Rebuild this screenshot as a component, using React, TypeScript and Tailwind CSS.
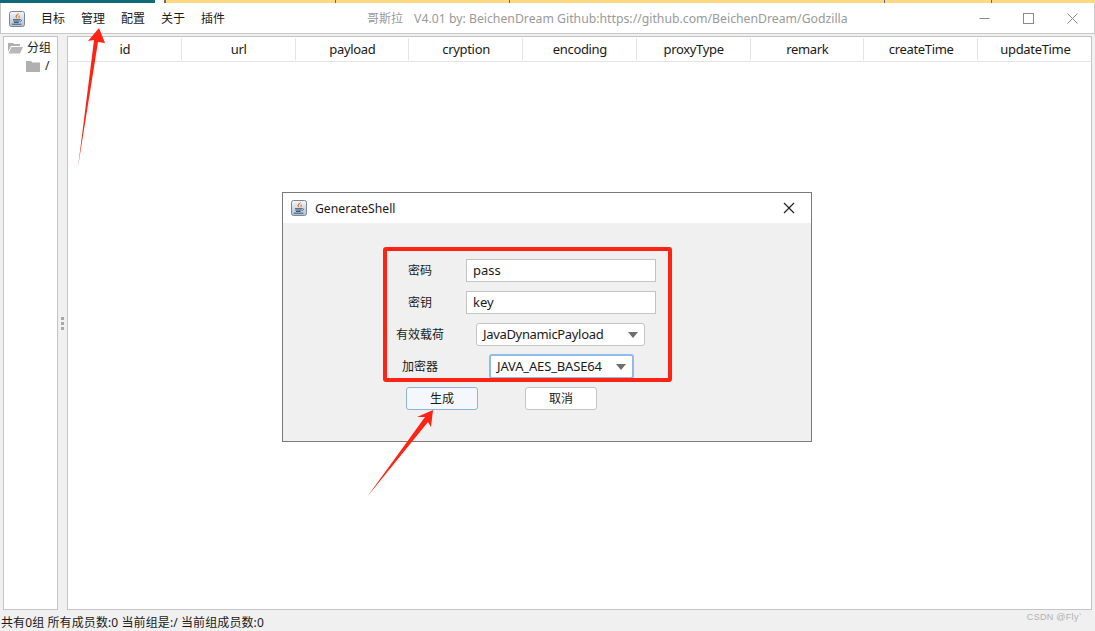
function JavaIcon() {
  return (
    <svg width="16" height="16" viewBox="0 0 16 16" className="shrink-0">
      <defs>
        <linearGradient id="jv" x1="0" y1="0" x2="0" y2="1">
          <stop offset="0" stopColor="#f6f7f9" />
          <stop offset="1" stopColor="#aebfd3" />
        </linearGradient>
      </defs>
      <rect x="0.5" y="0.5" width="15" height="15" rx="2" fill="url(#jv)" stroke="#76879b" />
      <path d="M9.6 1.8c.9 1.5-2.2 2.7-1.9 4.3.1.7.5 1.1.9 1.5-1.9-.7-2.6-1.9-1.8-3.2.7-1 2.7-1.5 2.8-2.6z" fill="#e06c14" />
      <path d="M11 3.9c-1 .6-1.8 1.1-1.5 2 .2.5.4.8.2 1.4.9-.5 1.3-1.2.9-1.9-.2-.5 0-.9.4-1.5z" fill="#e06c14" />
      <path d="M4 8.7h7M4.3 10.1h6.4M5 11.5h4.6M2.8 13.2h9.6" stroke="#3d5874" strokeWidth="1" fill="none" />
      <path d="M11 8.6c1.9-.4 2.2 1.6.1 2.1" stroke="#3d5874" strokeWidth="0.8" fill="none" />
    </svg>
  )
}

function OpenFolder() {
  return (
    <svg width="15" height="12" viewBox="0 0 15 12">
      <path d="M0 1h5l1 1h6v2H3L0 10z" fill="#b0b0b0" />
      <path d="M3.5 5H15l-3 6.5H0.5z" fill="#b8b8b8" />
    </svg>
  )
}

function Folder() {
  return (
    <svg width="14" height="11" viewBox="0 0 14 11">
      <path d="M0 0h5l1.5 1.5H14V11H0z" fill="#b0b0b0" />
    </svg>
  )
}

const columns = ['id', 'url', 'payload', 'cryption', 'encoding', 'proxyType', 'remark', 'createTime', 'updateTime']
const menus = ['目标', '管理', '配置', '关于', '插件']

function Select({ value, focused, width }: { value: string; focused?: boolean; width: string }) {
  return (
    <div
      className={`flex items-center justify-between rounded-[3px] bg-white ${width} ${
        focused
          ? '-my-[1px] h-[25px] border-2 border-[#8fbcec] pl-[6px] pr-[6px]'
          : 'h-[23px] border border-[#c4c4c4] pl-[6px] pr-[6px]'
      }`}
    >
      <span className={`pt-[1px] text-[13px] text-[#1a1a1a] ${focused ? 'tracking-[-0.15px]' : 'tracking-[-0.33px]'}`}>{value}</span>
      <span className="h-0 w-0 border-x-[5px] border-t-[6px] border-x-transparent border-t-[#6e6e6e]" />
    </div>
  )
}

export default function App() {
  return (
    <div
      className="relative h-[631px] w-[1095px] overflow-hidden bg-[#f0f0f0] text-[#1a1a1a]"
      style={{ fontFamily: '"Noto Sans", "Noto Sans CJK SC", sans-serif' }}
    >
      {/* strip of the window behind */}
      <div className="flex h-[3px] bg-[#ffd97f]">
        <div className="w-[155px] bg-[#0f6a78]" />
        <div className="w-[9px] bg-white" />
        <div className="w-[172px] border-l-2 border-r border-l-[#6b6b6b] border-r-[#5a6a80]" />
        <div className="w-[174px] border-r border-[#5a6a80]" />
        <div className="w-[375px] border-r border-[#5a6a80]" />
        <div className="w-[107px] border-r border-[#5a6a80]" />
      </div>

      {/* title bar */}
      <div className="flex h-[31px] items-center border-x border-b border-[#c8c8c8] bg-white pl-[8px] pt-[1px]">
        <JavaIcon />
        <div className="ml-[16px] flex gap-[16px] pt-[1px] text-[12px]">
          {menus.map((m) => (
            <span key={m}>{m}</span>
          ))}
        </div>
        <div className="ml-[142px] pt-[1px] text-[12px] text-[#9a9a9a]">
          哥斯拉
          <span className="ml-[11px] text-[12.25px]">V4.01 by: BeichenDream Github:https://github.com/BeichenDream/Godzilla</span>
        </div>
        <div className="ml-auto flex items-center gap-[33px] pr-[16px]">
          <svg width="11" height="11" viewBox="0 0 11 11" stroke="#8a8a8a" fill="none">
            <path d="M0.5 5.5h10" />
          </svg>
          <svg width="11" height="11" viewBox="0 0 11 11" stroke="#8a8a8a" fill="none">
            <rect x="0.5" y="0.5" width="10" height="10" />
          </svg>
          <svg width="11" height="11" viewBox="0 0 11 11" stroke="#8a8a8a" fill="none">
            <path d="M0.5 0.5l10 10M10.5 0.5l-10 10" />
          </svg>
        </div>
      </div>

      {/* main */}
      <div className="flex h-[576px] pl-[3px] pr-[3px] pt-[2px]">
        <div className="h-full w-[55px] shrink-0 border border-[#c4c4c4] bg-white pl-[4px] pt-[2px] text-[12px]">
          <div className="flex h-[18px] items-center gap-[4px]">
            <OpenFolder />
            <span>分组</span>
          </div>
          <div className="flex h-[18px] items-center gap-[5px] pl-[18px]">
            <Folder />
            <span>/</span>
          </div>
        </div>
        <div className="flex w-[9px] shrink-0 flex-col items-center justify-center gap-[2px]">
          <span className="h-[3px] w-[3px] bg-[#a8a8a8]" />
          <span className="h-[3px] w-[3px] bg-[#a8a8a8]" />
          <span className="h-[3px] w-[3px] bg-[#a8a8a8]" />
        </div>
        <div className="h-full min-w-0 flex-1 overflow-hidden border border-[#c4c4c4] bg-white">
          <div className="flex h-[25px] items-center border-b border-[#e4e4e4]">
            {columns.map((c, i) => (
              <div
                key={c}
                className={`flex h-[22px] w-[113.75px] shrink-0 items-center justify-center pl-[1px] pt-[2px] text-[13px] tracking-[-0.33px] ${
                  i < columns.length - 1 ? 'border-r border-[#e4e4e4]' : ''
                }`}
              >
                {c}
              </div>
            ))}
          </div>
        </div>
      </div>

      {/* status bar */}
      <div className="pl-[1px] pt-[5px] text-[12px] leading-[16px] tracking-[0.1px]">共有0组 所有成员数:0 当前组是:/ 当前组成员数:0</div>

      {/* watermark */}
      <div
        className="absolute right-[13px] top-[611px] text-[9px] tracking-[0.3px] text-[#b0b0b0]"
        style={{ fontFamily: '"Liberation Sans", sans-serif' }}
      >
        CSDN @Fly`
      </div>

      {/* dialog */}
      <div className="absolute left-[282px] top-[192px] h-[250px] w-[530px] border border-[#7a7a7a] bg-[#f0f0f0]">
        <div className="flex h-[30px] items-center bg-white pl-[8px] pr-[16px]">
          <JavaIcon />
          <span className="ml-[8px] pt-[2px] text-[12.2px]">GenerateShell</span>
          <svg width="12" height="12" viewBox="0 0 12 12" className="ml-auto" stroke="#222" strokeWidth="1.2">
            <path d="M1 1l10 10M11 1L1 11" />
          </svg>
        </div>
        <div className="flex flex-col gap-[9px] pt-[36px] text-[12px]">
          <div className="flex items-center pl-[125px]">
            <span className="w-[58px]">密码</span>
            <div className="flex h-[23px] w-[190px] items-center border border-[#c4c4c4] bg-white pl-[6px] pt-[1px] text-[13px]">pass</div>
          </div>
          <div className="flex items-center pl-[125px]">
            <span className="w-[58px]">密钥</span>
            <div className="flex h-[23px] w-[190px] items-center border border-[#c4c4c4] bg-white pl-[6px] pt-[1px] text-[13px]">key</div>
          </div>
          <div className="flex items-center pl-[113px]">
            <span className="w-[80px]">有效载荷</span>
            <Select value="JavaDynamicPayload" width="w-[169px]" />
          </div>
          <div className="flex items-center pl-[119px]">
            <span className="w-[87px]">加密器</span>
            <Select value="JAVA_AES_BASE64" width="w-[145px]" focused />
          </div>
          <div className="flex gap-[47px] pl-[123px]">
            <div className="flex h-[23px] w-[72px] items-center justify-center rounded-[3px] border border-[#8fb4dc] bg-[#f4f7fb]">生成</div>
            <div className="flex h-[23px] w-[72px] items-center justify-center rounded-[3px] border border-[#c4c4c4] bg-white">取消</div>
          </div>
        </div>
      </div>

      {/* annotations */}
      <div className="absolute left-[383px] top-[247px] h-[135px] w-[289px] rounded-[3px] border-4 border-[#ff2314]" />
      <svg className="pointer-events-none absolute inset-0" width="1095" height="631">
        <polygon points="78,167 94,40 88,41 99,28 105,43 98,42" fill="#ff2314" />
        <polygon points="367,497 425,417 417,417 433,410 431,427 428,422" fill="#ff2314" />
      </svg>
    </div>
  )
}
